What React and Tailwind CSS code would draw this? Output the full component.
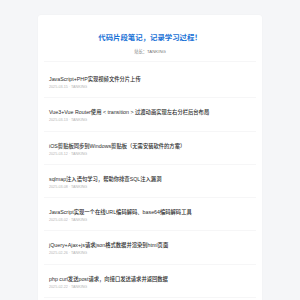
import React from 'react';

const posts = [
  { title: 'JavaScript+PHP实现视频文件分片上传', date: '2025-03-15' },
  { title: 'Vue3+Vue Router使用 < transition > 过渡动画实现左右分栏后台布局', date: '2025-03-13' },
  { title: 'iOS剪贴板同步到Windows剪贴板（无需安装软件的方案）', date: '2025-03-12' },
  { title: 'sqlmap注入语句学习，帮助你排查SQL注入漏洞', date: '2025-03-08' },
  { title: 'JavaScript实现一个在线URL编码解码、base64编码解码工具', date: '2025-03-02' },
  { title: 'jQuery+Ajax+js请求json格式数据并渲染到html页面', date: '2025-02-26' },
  { title: 'php curl发送post请求，向接口发送请求并返回数据', date: '2025-02-22' },
];

const App = () => {
  return (
    <div
      className="h-[300px] overflow-hidden bg-[#f5f6f8] pt-[15px]"
      style={{ fontFamily: '"Liberation Sans", "Noto Sans CJK SC", sans-serif' }}
    >
      <div className="mx-auto w-[224px] bg-white rounded-[3px] shadow-[0_0_2px_rgba(0,0,0,0.04)] px-[6px] pb-4">
        {/* 头部 */}
        <div className="pt-[18px] pb-[6px] border-b border-[#f6f6f7] text-center">
          <h1 className="text-[7.4px] leading-[10px] font-bold text-[#1a72d6]">代码片段笔记，记录学习过程！</h1>
          <p className="mt-[6px] text-[4.3px] leading-[6px] text-[#777]">站长：TANKING</p>
        </div>

        {/* 文章列表 */}
        <ul className="mt-[3px]">
          {posts.map((post) => (
            <li key={post.date} className="border-b border-[#f6f6f7] pl-[5px] pt-[10px] pb-[7.3px]">
              <div className="text-[5.3px] leading-[8px] font-medium text-[#2b2b2b] whitespace-nowrap">{post.title}</div>
              <div className="mt-[1px] text-[3.7px] leading-[6px] text-[#b3b3b3] whitespace-nowrap">
                {post.date} · TANKING
              </div>
            </li>
          ))}
        </ul>
      </div>
    </div>
  );
};

export default App;
